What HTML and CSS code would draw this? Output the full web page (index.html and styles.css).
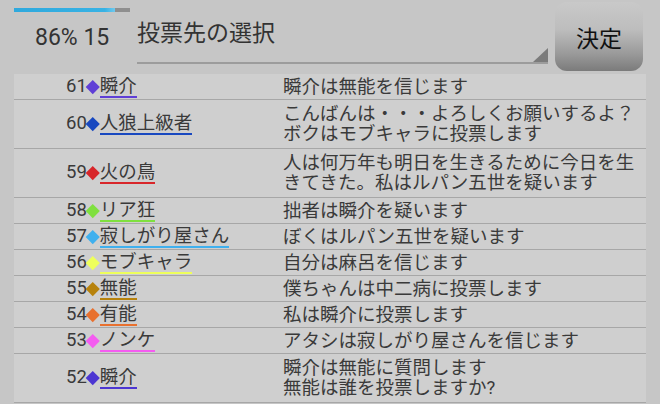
FILE: index.html
```html
<!DOCTYPE html>
<html lang="ja">
<head>
<meta charset="utf-8">
<title>投票先の選択</title>
<link rel="stylesheet" href="styles.css">
</head>
<body>
<header class="top">
  <div class="status">
    <div class="progress"><div class="progress-fill" style="width:87%"></div></div>
    <div class="count">86% 15</div>
  </div>
  <div class="spinner">
    <div class="spinner-title">投票先の選択</div>
    <div class="spinner-arrow"></div>
  </div>
  <button class="decide">決定</button>
</header>
<main class="list">
  <div class="row">
    <div class="who"><span class="num">61</span><span class="dia c-purple"></span><span class="name c-purple">瞬介</span></div>
    <div class="msg">瞬介は無能を信じます</div>
  </div>
  <div class="row two">
    <div class="who"><span class="num">60</span><span class="dia c-blue"></span><span class="name c-blue">人狼上級者</span></div>
    <div class="msg">こんばんは・・・よろしくお願いするよ？<br>ボクはモブキャラに投票します</div>
  </div>
  <div class="row two">
    <div class="who"><span class="num">59</span><span class="dia c-red"></span><span class="name c-red">火の鳥</span></div>
    <div class="msg">人は何万年も明日を生きるために今日を生<br>きてきた。私はルパン五世を疑います</div>
  </div>
  <div class="row">
    <div class="who"><span class="num">58</span><span class="dia c-green"></span><span class="name c-green">リア狂</span></div>
    <div class="msg">拙者は瞬介を疑います</div>
  </div>
  <div class="row">
    <div class="who"><span class="num">57</span><span class="dia c-sky"></span><span class="name c-sky">寂しがり屋さん</span></div>
    <div class="msg">ぼくはルパン五世を疑います</div>
  </div>
  <div class="row">
    <div class="who"><span class="num">56</span><span class="dia c-yellow"></span><span class="name c-yellow">モブキャラ</span></div>
    <div class="msg">自分は麻呂を信じます</div>
  </div>
  <div class="row">
    <div class="who"><span class="num">55</span><span class="dia c-brown"></span><span class="name c-brown">無能</span></div>
    <div class="msg">僕ちゃんは中二病に投票します</div>
  </div>
  <div class="row">
    <div class="who"><span class="num">54</span><span class="dia c-orange"></span><span class="name c-orange">有能</span></div>
    <div class="msg">私は瞬介に投票します</div>
  </div>
  <div class="row">
    <div class="who"><span class="num">53</span><span class="dia c-pink"></span><span class="name c-pink">ノンケ</span></div>
    <div class="msg">アタシは寂しがり屋さんを信じます</div>
  </div>
  <div class="row two">
    <div class="who"><span class="num">52</span><span class="dia c-indigo"></span><span class="name c-indigo">瞬介</span></div>
    <div class="msg">瞬介は無能に質問します<br>無能は誰を投票しますか?</div>
  </div>
</main>
</body>
</html>
```

FILE: styles.css
```css
html, body {
  margin: 0;
  padding: 0;
}
body {
  width: 660px;
  height: 404px;
  overflow: hidden;
  background: #c6c6c6;
  font-family: Roboto, "Noto Sans CJK JP", sans-serif;
  color: #3a3a3a;
}

/* header */
.top {
  display: flex;
  align-items: flex-start;
  height: 74px;
  padding-left: 14px;
  box-sizing: border-box;
}
.status {
  width: 123px;
  flex: none;
  padding-top: 8px;
}
.progress {
  width: 116px;
  height: 4px;
  background: #8f8f8f;
}
.progress-fill {
  height: 100%;
  background: linear-gradient(90deg, #2fa9dd 0%, #38b2e4 90%, #6fc9ee 100%);
}
.count {
  margin-top: 12px;
  padding-left: 21px;
  font-size: 23px;
  line-height: 28px;
  color: #333;
  white-space: nowrap;
}
.spinner {
  width: 411px;
  flex: none;
  height: 64px;
  box-sizing: border-box;
  padding-top: 20px;
  border-bottom: 2px solid #9c9c9c;
  display: flex;
  flex-direction: column;
  margin-right: 7px;
}
.spinner-title {
  font-size: 23px;
  line-height: 28px;
  color: #333;
}
.spinner-arrow {
  margin-top: auto;
  align-self: flex-end;
  width: 15px;
  height: 15px;
  background: #7b7b7b;
  clip-path: polygon(100% 0, 100% 100%, 0 100%);
}
.decide {
  flex: none;
  width: 88px;
  height: 69px;
  margin-top: 2px;
  padding: 0;
  border: none;
  border-radius: 12px;
  background: linear-gradient(180deg, #c9c9c9 0%, #bdbdbd 40%, #9a9a9a 75%, #7b7b7b 100%);
  font-family: "Noto Sans CJK JP", sans-serif;
  font-size: 23px;
  color: #111;
}

/* list */
.list {
  margin: 0 14px;
  background: #cfcfcf;
}
.row {
  display: grid;
  grid-template-columns: 269px 1fr;
  align-items: center;
  min-height: 25px;
  border-bottom: 1px solid #a7a7a7;
}
.who {
  padding-left: 52px;
  white-space: nowrap;
  font-size: 18.5px;
  line-height: 20px;
}
.num {
  color: #3a3a3a;
}
.dia {
  display: inline-block;
  width: 9.5px;
  height: 9.5px;
  margin: 0 2.5px 0 1px;
  transform: rotate(45deg);
  vertical-align: 0.5px;
  background: currentColor;
}
.name {
  display: inline-block;
  border-bottom: 2px solid currentColor;
}
.name::first-line {
  color: #3a3a3a;
}
.msg {
  font-size: 18.5px;
  line-height: 20px;
  color: #3a3a3a;
  white-space: nowrap;
}
.row.two .msg {
  padding: 4px 0;
}

.c-purple { color: #5f3fd6; }
.c-blue { color: #1848c0; }
.c-red { color: #d8262a; }
.c-green { color: #7fe03f; }
.c-sky { color: #3fb0ee; }
.c-yellow { color: #eeff5a; }
.c-brown { color: #b7820c; }
.c-orange { color: #e8702e; }
.c-pink { color: #f45cf0; }
.c-indigo { color: #4c36d2; }
```
